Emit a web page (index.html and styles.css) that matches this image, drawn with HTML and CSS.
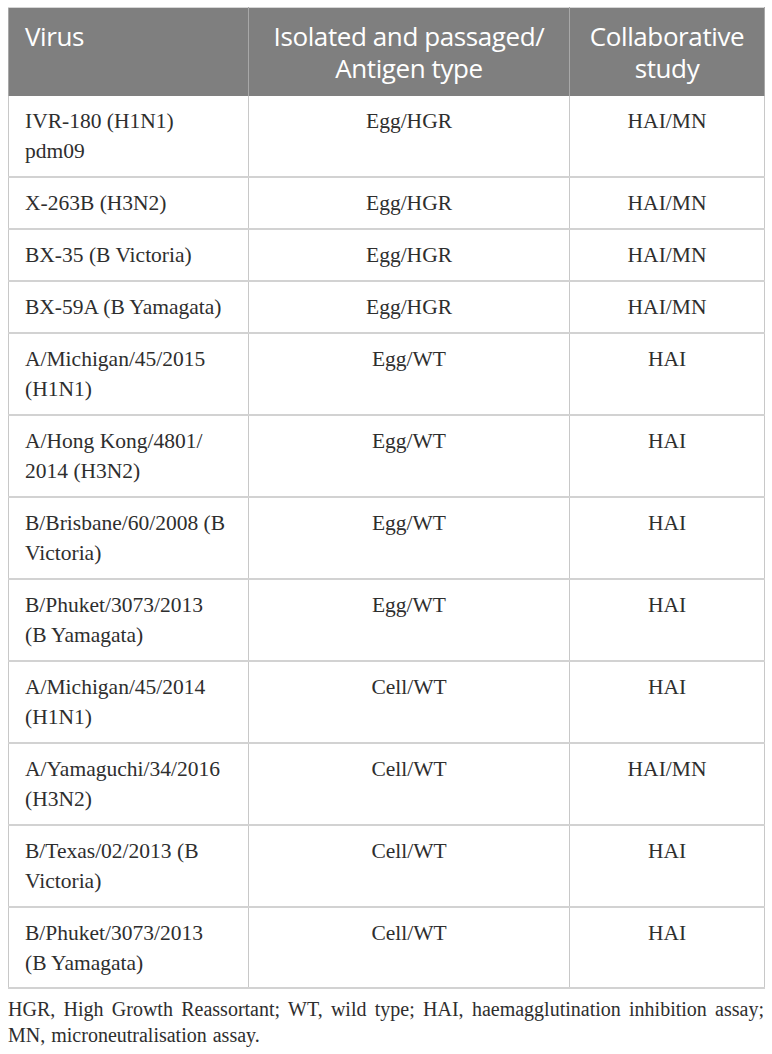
FILE: index.html
```html
<!DOCTYPE html>
<html>
<head>
<meta charset="utf-8">
<link rel="stylesheet" href="styles.css">
</head>
<body>
<table class="data">
  <colgroup>
    <col class="c1"><col class="c2"><col class="c3">
  </colgroup>
  <thead>
    <tr>
      <th class="left">Virus</th>
      <th>Isolated and passaged/<br>Antigen type</th>
      <th>Collaborative<br>study</th>
    </tr>
  </thead>
  <tbody>
    <tr><td class="left">IVR-180 (H1N1)<br>pdm09</td><td>Egg/HGR</td><td>HAI/MN</td></tr>
    <tr><td class="left">X-263B (H3N2)</td><td>Egg/HGR</td><td>HAI/MN</td></tr>
    <tr><td class="left">BX-35 (B Victoria)</td><td>Egg/HGR</td><td>HAI/MN</td></tr>
    <tr><td class="left">BX-59A (B Yamagata)</td><td>Egg/HGR</td><td>HAI/MN</td></tr>
    <tr><td class="left">A/Michigan/45/2015<br>(H1N1)</td><td>Egg/WT</td><td>HAI</td></tr>
    <tr><td class="left">A/Hong Kong/4801/<br>2014 (H3N2)</td><td>Egg/WT</td><td>HAI</td></tr>
    <tr><td class="left">B/Brisbane/60/2008 (B<br>Victoria)</td><td>Egg/WT</td><td>HAI</td></tr>
    <tr><td class="left">B/Phuket/3073/2013<br>(B Yamagata)</td><td>Egg/WT</td><td>HAI</td></tr>
    <tr><td class="left">A/Michigan/45/2014<br>(H1N1)</td><td>Cell/WT</td><td>HAI</td></tr>
    <tr><td class="left">A/Yamaguchi/34/2016<br>(H3N2)</td><td>Cell/WT</td><td>HAI/MN</td></tr>
    <tr><td class="left">B/Texas/02/2013 (B<br>Victoria)</td><td>Cell/WT</td><td>HAI</td></tr>
    <tr><td class="left">B/Phuket/3073/2013<br>(B Yamagata)</td><td>Cell/WT</td><td>HAI</td></tr>
  </tbody>
</table>
<p class="note">HGR, High Growth Reassortant; WT, wild type; HAI, haemagglutination inhibition assay; MN, microneutralisation assay.</p>
</body>
</html>
```
FILE: styles.css
```css
html, body {
  margin: 0;
  padding: 0;
  background: #ffffff;
}
body {
  padding: 7px 8px 0 8px;
}
.data {
  width: 756px;
  border-collapse: collapse;
  table-layout: fixed;
  font-family: "Liberation Serif", "Times New Roman", serif;
  color: #2e2e2e;
}
.c1 { width: 240px; }
.c2 { width: 321px; }
.c3 { width: 195px; }
.data th {
  background: #7f7f7f;
  color: #ffffff;
  font-family: "Open Sans", "Noto Sans", sans-serif;
  font-weight: normal;
  font-size: 26px;
  line-height: 32px;
  text-align: center;
  vertical-align: top;
  padding: 12px 10px 12px 16px;
  border-top: 1px solid #d6d6d6;
  border-left: 1px solid #a8a8a8;
  border-right: 1px solid #a8a8a8;
  letter-spacing: -0.4px;
}
.data th:not(.left) {
  padding-left: 8px;
  padding-right: 8px;
}
.data th.left {
  text-align: left;
}
.data td {
  font-size: 21.5px;
  line-height: 30px;
  text-align: center;
  vertical-align: top;
  padding: 10px 16px 10px 16px;
  border-left: 1px solid #c8c8c8;
  border-right: 1px solid #c8c8c8;
  border-bottom: 2px solid #d2d2d2;
}
.data tbody tr:last-child td {
  padding-bottom: 9px;
}
.data td.left {
  text-align: left;
}
.note {
  width: 756px;
  margin: 7px 0 0 0;
  font-family: "Liberation Serif", "Times New Roman", serif;
  font-size: 20px;
  line-height: 26px;
  word-spacing: 1px;
  color: #2e2e2e;
  text-align: justify;
}
```
